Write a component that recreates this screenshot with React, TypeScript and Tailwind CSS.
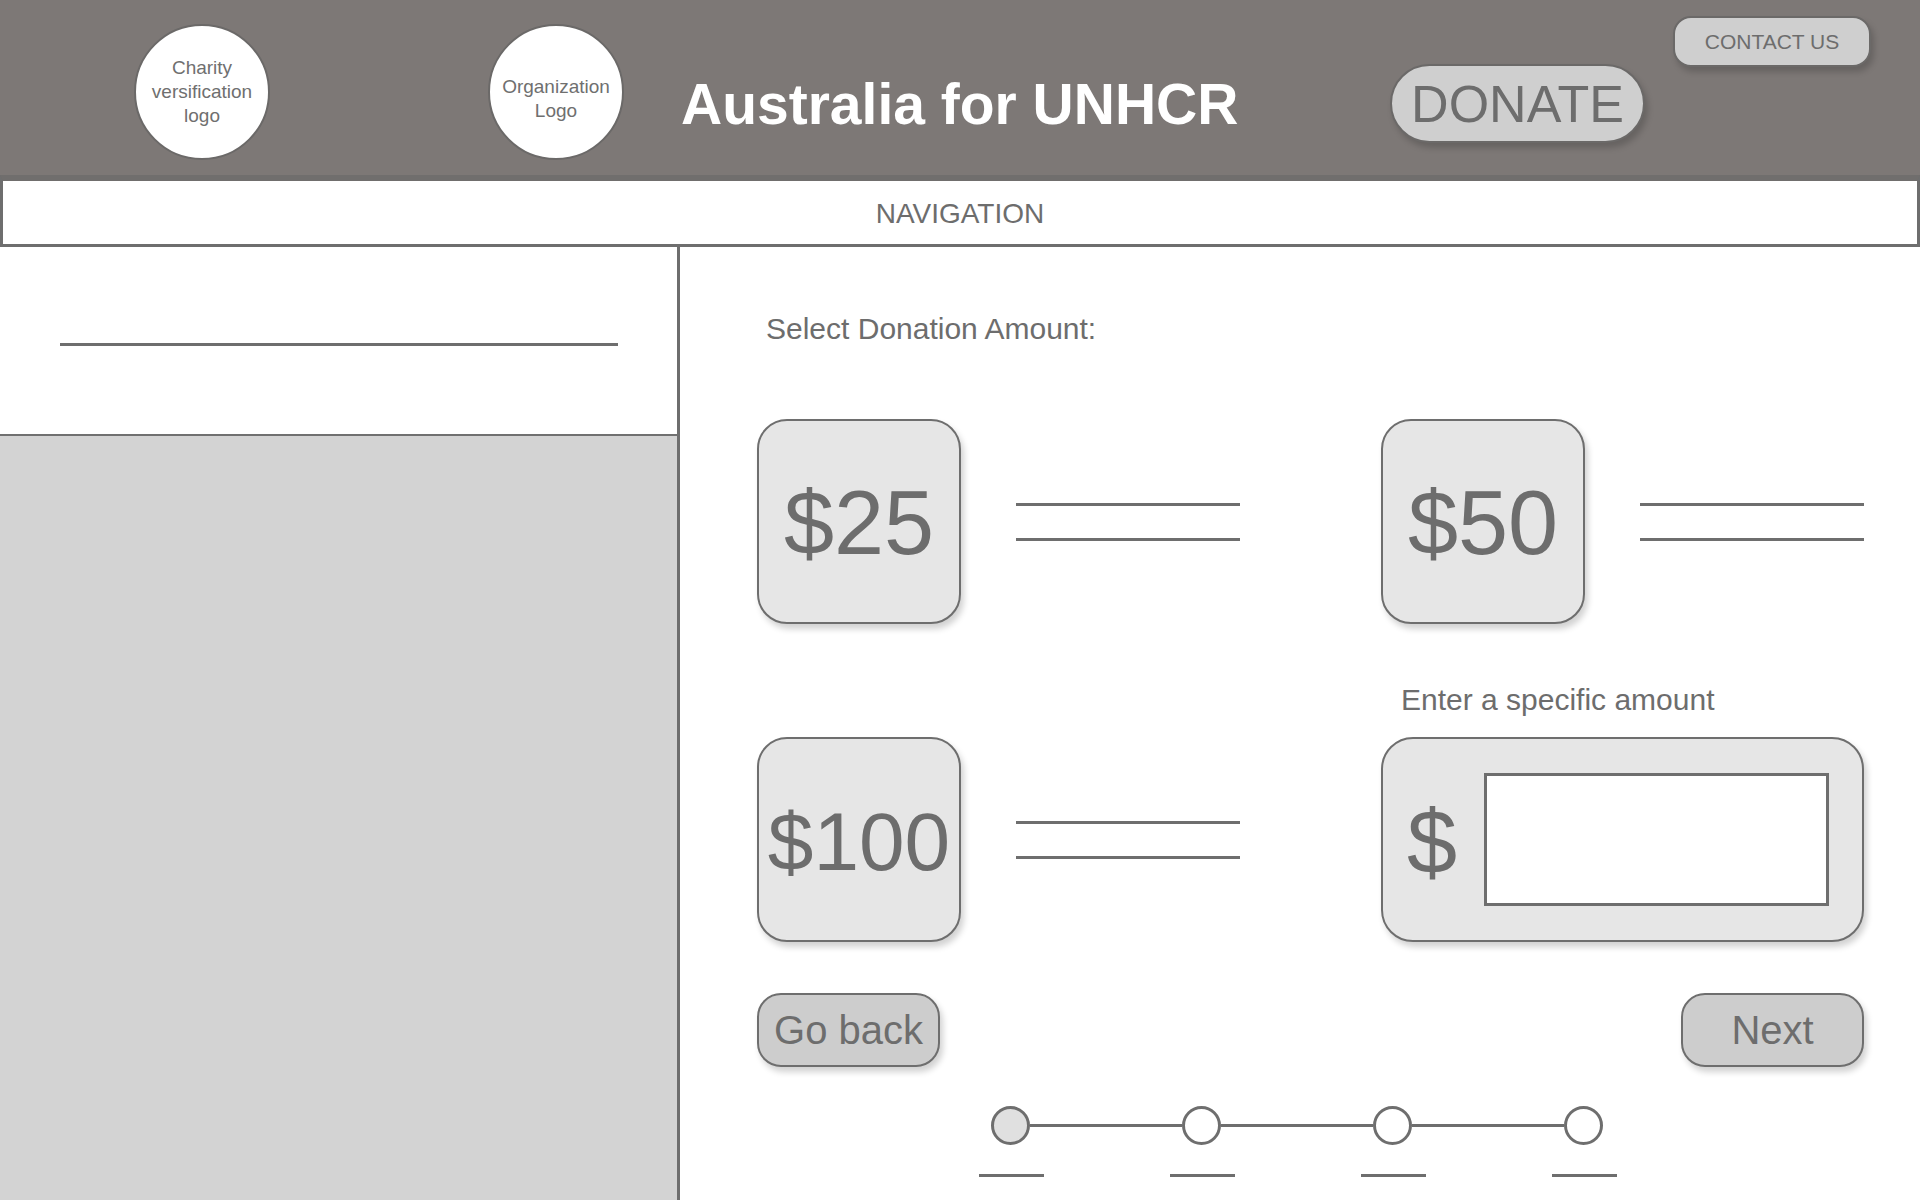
import React from 'react';

const shadow = 'shadow-[3px_5px_6px_rgba(0,0,0,0.18)]';

const LogoCircle = ({ lines, className }: { lines: string[]; className?: string }) => (
  <div
    className={`w-[136px] h-[136px] mt-[24px] shrink-0 rounded-full bg-white border-2 border-[#6b6968] flex flex-col items-center justify-center text-center text-[19px] leading-[24px] text-[#6f6f6f] ${className || ''}`}
  >
    {lines.map((l) => (
      <span key={l}>{l}</span>
    ))}
  </div>
);

const Lines = () => (
  <div className="w-[224px] flex flex-col justify-center gap-[32px]">
    <div className="h-[3px] bg-[#6e6e6e]" />
    <div className="h-[3px] bg-[#6e6e6e]" />
  </div>
);

const AmountOption = ({ amount, size }: { amount: string; size: 'lg' | 'md' }) => (
  <div className="flex gap-[55px]">
    <button
      className={`w-[204px] h-[205px] rounded-[30px] bg-[#e6e6e6] border-2 border-[#6e6e6e] flex items-center justify-center pt-[4px] text-[#6d6d6d] ${shadow} ${
        size === 'lg' ? 'text-[90px]' : 'text-[82px]'
      }`}
    >
      {amount}
    </button>
    <Lines />
  </div>
);

const NavButton = ({ label }: { label: string }) => (
  <button
    className={`w-[183px] h-[74px] rounded-[24px] bg-[#cdcdcd] border-2 border-[#6e6e6e] text-[40px] text-[#6d6d6d] flex items-center justify-center ${shadow}`}
  >
    {label}
  </button>
);

const Stepper = ({ steps, current }: { steps: number; current: number }) => (
  <div className="ml-[222px] mt-[39px] flex flex-col">
    <div className="ml-[12px] flex items-center">
      {Array.from({ length: steps }).map((_, i) => (
        <React.Fragment key={i}>
          {i > 0 && <div className="w-[152px] h-[3px] bg-[#6e6e6e]" />}
          <div
            className={`w-[39px] h-[39px] rounded-full border-[3px] border-[#6e6e6e] ${
              i === current ? 'bg-[#e0e0e0]' : 'bg-white'
            }`}
          />
        </React.Fragment>
      ))}
    </div>
    <div className="mt-[29px] flex gap-[126px]">
      {Array.from({ length: steps }).map((_, i) => (
        <div key={i} className="w-[65px] h-[3px] bg-[#6e6e6e]" />
      ))}
    </div>
  </div>
);

export default function App() {
  return (
    <div className="w-[1920px] h-[1200px] overflow-hidden bg-white flex flex-col font-['Liberation_Sans',Arial,sans-serif]">
      {/* header */}
      <header className="h-[175px] shrink-0 bg-[#7d7876] flex items-start pl-[134px]">
        <LogoCircle lines={['Charity', 'versification', 'logo']} />
        <LogoCircle lines={['Organization', 'Logo']} className="ml-[218px] pt-[14px]" />
        <div className="ml-[57px] w-[709px] mt-[76px] text-[57px] leading-[57px] font-bold text-white whitespace-nowrap">
          Australia for UNHCR
        </div>
        <button
          className={`w-[255px] h-[79px] mt-[64px] rounded-[40px] bg-[#cfcfcf] border-2 border-[#6b6968] text-[52px] text-[#6d6d6d] flex items-center justify-center ${shadow}`}
        >
          DONATE
        </button>
        <button
          className={`ml-[28px] mt-[16px] w-[198px] h-[51px] rounded-[18px] bg-[#cfcfcf] border-2 border-[#6b6968] text-[21px] text-[#6d6d6d] flex items-center justify-center ${shadow}`}
        >
          CONTACT US
        </button>
      </header>

      {/* navigation */}
      <nav className="h-[72px] shrink-0 bg-white border-x-[3px] border-b-[3px] border-t-[6px] border-[#6e6e6e] border-t-[#706e6d] flex items-center justify-center pt-[2px] text-[28px] text-[#6d6d6d]">
        NAVIGATION
      </nav>

      {/* body */}
      <div className="flex-1 flex min-h-0">
        <aside className="w-[680px] shrink-0 border-r-[3px] border-[#6e6e6e] flex flex-col">
          <div className="h-[187px] pt-[96px] pl-[60px]">
            <div className="w-[558px] h-[3px] bg-[#6e6e6e]" />
          </div>
          <div className="flex-1 bg-[#d3d3d3] border-t-2 border-[#707070]" />
        </aside>

        <main className="flex-1 pl-[77px] flex flex-col text-[#6d6d6d]">
          <div className="mt-[65px] pl-[9px] text-[30px] leading-[34px]">Select Donation Amount:</div>

          <div className="mt-[73px] flex">
            <div className="w-[624px]">
              <AmountOption amount="$25" size="lg" />
            </div>
            <AmountOption amount="$50" size="lg" />
          </div>

          <div className="mt-[59px] pl-[644px] text-[30px] leading-[34px]">Enter a specific amount</div>

          <div className="mt-[20px] flex">
            <div className="w-[624px]">
              <AmountOption amount="$100" size="md" />
            </div>
            <div
              className={`w-[483px] h-[205px] rounded-[32px] bg-[#e6e6e6] border-2 border-[#6e6e6e] flex items-center pl-[24px] pr-[33px] ${shadow}`}
            >
              <span className="text-[90px] leading-none w-[50px] pt-[4px]">$</span>
              <input
                type="text"
                className="ml-[27px] w-[345px] h-[133px] bg-white border-[3px] border-[#6e6e6e] outline-none"
                readOnly
              />
            </div>
          </div>

          <div className="mt-[51px] w-[1107px] flex justify-between">
            <NavButton label="Go back" />
            <NavButton label="Next" />
          </div>

          <Stepper steps={4} current={0} />
        </main>
      </div>
    </div>
  );
}
